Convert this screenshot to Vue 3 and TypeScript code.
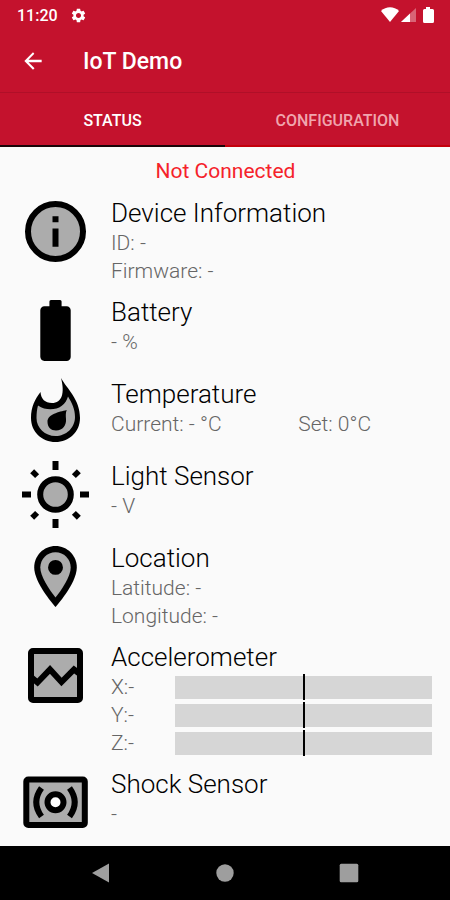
<script setup lang="ts">
import { ref } from 'vue'

type Icon = 'info' | 'battery' | 'flame' | 'sun' | 'pin' | 'chart' | 'shock'

interface Sensor {
  icon: Icon
  title: string
  lines?: string[][]
  axes?: string[]
}

const sensors: Sensor[] = [
  { icon: 'info', title: 'Device Information', lines: [['ID: -'], ['Firmware: -']] },
  { icon: 'battery', title: 'Battery', lines: [['- %']] },
  { icon: 'flame', title: 'Temperature', lines: [['Current: - °C', 'Set: 0°C']] },
  { icon: 'sun', title: 'Light Sensor', lines: [['- V']] },
  { icon: 'pin', title: 'Location', lines: [['Latitude: -'], ['Longitude: -']] },
  { icon: 'chart', title: 'Accelerometer', axes: ['X', 'Y', 'Z'] },
  { icon: 'shock', title: 'Shock Sensor', lines: [['-']] },
]

const tabs = ['Status', 'Configuration']
const active = ref('Status')
const straightRays = [0, 90, 180, 270]
const diagonalRays = [45, 135, 225, 315]
</script>

<template>
  <div class="screen">
    <header class="top">
      <div class="statusbar">
        <span class="clock">11:20</span>
        <svg class="gear" viewBox="0 0 24 24" aria-hidden="true">
          <path d="M19.14 12.94c.04-.3.06-.61.06-.94 0-.32-.02-.64-.07-.94l2.03-1.58c.18-.14.23-.41.12-.61l-1.92-3.32c-.12-.22-.37-.29-.59-.22l-2.39.96c-.5-.38-1.03-.7-1.62-.94L14.4 2.81c-.04-.24-.24-.41-.48-.41h-3.84c-.24 0-.43.17-.47.41L9.25 5.35c-.59.24-1.13.57-1.62.94l-2.39-.96c-.22-.08-.47 0-.59.22L2.74 8.87c-.12.21-.08.47.12.61l2.03 1.58c-.05.3-.09.63-.09.94s.02.64.07.94l-2.03 1.58c-.18.14-.23.41-.12.61l1.92 3.32c.12.22.37.29.59.22l2.39-.96c.5.38 1.03.7 1.62.94l.36 2.54c.05.24.24.41.48.41h3.84c.24 0 .44-.17.47-.41l.36-2.54c.59-.24 1.13-.56 1.62-.94l2.39.96c.22.08.47 0 .59-.22l1.92-3.32c.12-.22.07-.47-.12-.61l-2.01-1.58zM12 15.6c-1.98 0-3.6-1.62-3.6-3.6s1.62-3.6 3.6-3.6 3.6 1.62 3.6 3.6-1.62 3.6-3.6 3.6z" />
        </svg>
        <svg class="signals" viewBox="0 0 54 16" aria-hidden="true">
          <path d="M0 4C5 -1 13 -1 18 4L9 15z" />
          <path d="M20 15L35 1V15z" opacity=".35" />
          <path d="M20 15L29 6.500V15z" />
          <path d="M45 0h4v2h2.500q1.500 0 1.500 1.500v11q0 1.500-1.500 1.500h-8q-1.500 0-1.500-1.500v-11q0-1.500 1.500-1.500h1.500z" />
        </svg>
      </div>
      <div class="toolbar">
        <button class="back" type="button" aria-label="Back">
          <svg viewBox="0 0 24 24"><path d="M20 10.800H7.830l5.390-5.390L12 4l-8 8 8 8 1.410-1.410L7.830 13.200H20z" /></svg>
        </button>
        <h1>IoT Demo</h1>
      </div>
      <div class="tabs" role="tablist">
        <button
          v-for="tab in tabs"
          :key="tab"
          type="button"
          role="tab"
          class="tab"
          :class="{ active: tab === active }"
          :aria-selected="tab === active"
          @click="active = tab"
        >{{ tab }}</button>
      </div>
    </header>

    <main>
      <p class="connection">Not Connected</p>
      <section v-for="s in sensors" :key="s.title" class="sensor">
        <svg class="icon" viewBox="0 0 73 73" aria-hidden="true">
          <g v-if="s.icon === 'info'">
            <circle cx="36.500" cy="36.500" r="27.500" class="outlined" />
            <path d="M33.500 21.300h6v6h-6zM33.500 33.500h6v18.200h-6z" />
          </g>
          <path
            v-else-if="s.icon === 'battery'"
            transform="scale(3.042)"
            d="M15.670 4H14V2.500Q14 2 13.500 2h-3Q10 2 10 2.500V4H8.330C7.600 4 7 4.600 7 5.330v15.330C7 21.400 7.600 22 8.330 22h7.330c.74 0 1.340-.6 1.340-1.330V5.330C17 4.600 16.400 4 15.670 4z"
          />
          <g v-else-if="s.icon === 'flame'">
            <path d="M42 2C48 13 61 23 61 42C61 56 50 66 36.500 66C23 66 12 56 12 42C12 31 16 23 21.500 16C22 23 26 27 33 27C43 27 46 17 42 2z" />
            <path class="tone" d="M19 29.500C27 35 37 34 42.500 30C46 27.500 48 24 49 20.500C53 27 56 33 56 41C56 52 47 60 36.500 60C26 60 17.500 52 17.500 42C17.500 37 18 33 19 29.500z" />
            <path d="M47.700 34C40 36 28.500 38 28.500 46C28.500 51 32 54.500 37 54.500C44 54.500 47.500 49 47 43C46.800 40 46.500 37 47.700 34z" />
          </g>
          <g v-else-if="s.icon === 'sun'">
            <circle cx="36.500" cy="36.500" r="15.300" class="outlined" />
            <path v-for="a in straightRays" :key="a" :transform="`rotate(${a} 36.5 36.5)`" d="M33.500 3h6v9h-6z" />
            <path v-for="a in diagonalRays" :key="a" :transform="`rotate(${a} 36.5 36.5)`" d="M33.700 3.500h5.600v7h-5.600z" />
          </g>
          <g v-else-if="s.icon === 'pin'" transform="scale(3.042)">
            <path d="M12 2C8.130 2 5 5.130 5 9c0 5.250 7 13 7 13s7-7.750 7-13c0-3.870-3.130-7-7-7z" />
            <path class="tone" d="M7 9c0-2.760 2.240-5 5-5s5 2.240 5 5c0 2.880-2.880 7.190-5 9.880C9.920 16.210 7 11.850 7 9z" />
            <circle cx="12" cy="9" r="2.450" />
          </g>
          <g v-else-if="s.icon === 'chart'">
            <rect x="12" y="12" width="49" height="49" rx="2" class="outlined" />
            <path class="line" d="M12 38L18.500 43.500L31 30.500L42.500 43L55 30.500L61 35" />
          </g>
          <g v-else>
            <rect x="7.300" y="13.500" width="58.500" height="45.500" rx="2" class="outlined" />
            <circle cx="36.500" cy="36.300" r="8" class="outlined hollow" />
            <path class="line" d="M22.500 22Q12 36.300 22.500 50.500M50.500 22Q61 36.300 50.500 50.500" />
          </g>
        </svg>
        <div class="text">
          <h2>{{ s.title }}</h2>
          <p v-for="(line, i) in s.lines" :key="i" class="line-row">
            <span v-for="part in line" :key="part">{{ part }}</span>
          </p>
          <div v-for="axis in s.axes" :key="axis" class="axis">
            <span>{{ axis }}:-</span>
            <div class="bar"><i class="marker"></i></div>
          </div>
        </div>
      </section>
    </main>

    <nav class="navbar">
      <button type="button" aria-label="Back"><svg viewBox="0 0 20 20"><path d="M1 10L18 .500V19.500z" /></svg></button>
      <button type="button" aria-label="Home"><svg viewBox="0 0 20 20"><circle cx="10" cy="10" r="8.700" /></svg></button>
      <button type="button" aria-label="Recent apps"><svg viewBox="0 0 20 20"><rect x=".7" y=".7" width="18.600" height="18.600" rx="1.500" /></svg></button>
    </nav>
  </div>
</template>

<style>
body {
  margin: 0;
  background: #fafafa;
}
</style>

<style scoped>
.screen {
  display: flex;
  flex-direction: column;
  min-height: 100vh;
  font-family: Roboto, sans-serif;
  background: #fafafa;
  color: #000;
}
button {
  margin: 0;
  padding: 0;
  border: 0;
  background: none;
  font-family: inherit;
  cursor: pointer;
}
h1, h2, p {
  margin: 0;
}
.top {
  background: #c4122d;
  color: #fff;
  fill: #fff;
}
.statusbar {
  display: flex;
  align-items: center;
  height: 30px;
  padding: 0 15px 0 17px;
}
.clock {
  font-size: 16px;
  font-weight: 500;
}
.gear {
  width: 17px;
  height: 17px;
  margin-left: 12px;
}
.signals {
  width: 54px;
  height: 16px;
  margin-left: auto;
}
.toolbar {
  display: flex;
  align-items: center;
  height: 62px;
  padding-left: 20px;
  border-bottom: 1px solid #b00f28;
}
.back {
  display: flex;
}
.back svg {
  width: 26px;
  height: 26px;
  fill: #fff;
}
h1 {
  margin-left: 37px;
  font-size: 23px;
  font-weight: 500;
}
.tabs {
  display: grid;
  grid-template-columns: 1fr 1fr;
}
.tab {
  height: 54px;
  padding-top: 2px;
  border-bottom: 2px solid #c4000c;
  color: #f0a5ae;
  font-size: 16px;
  font-weight: 500;
  text-transform: uppercase;
}
.tab.active {
  border-color: #1a0508;
  color: #fff;
}
main {
  flex: 1;
  padding: 10px 18px 0 19px;
}
.connection {
  padding-bottom: 10px;
  color: #f5222a;
  font-size: 21px;
  font-weight: 400;
  line-height: 28px;
  text-align: center;
}
.sensor {
  display: flex;
  gap: 19px;
  margin-bottom: 9px;
}
.sensor:last-child {
  margin-bottom: 0;
}
.icon {
  flex: none;
  width: 73px;
  height: 73px;
}
.tone {
  fill: #acacac;
}
.outlined {
  fill: #acacac;
  stroke: #000;
  stroke-width: 6px;
}
.hollow {
  fill: #fff;
}
.line {
  fill: none;
  stroke: #000;
  stroke-width: 6px;
}
.text {
  flex: 1;
  padding-top: 2px;
}
h2 {
  font-size: 26px;
  font-weight: 300;
  line-height: 32px;
}
.line-row {
  display: grid;
  grid-template-columns: 7fr 5fr;
}
.line-row,
.axis {
  color: #666;
  font-size: 21px;
  font-weight: 300;
  line-height: 28px;
}
.axis {
  display: grid;
  grid-template-columns: 1fr 4fr;
  align-items: center;
}
.bar {
  display: flex;
  align-items: center;
  justify-content: center;
  height: 23px;
  background: #d6d6d6;
}
.marker {
  flex: none;
  width: 2px;
  height: 26px;
  background: #000;
}
.navbar {
  display: flex;
  justify-content: center;
  gap: 104px;
  height: 54px;
  background: #000;
}
.navbar button {
  display: flex;
  align-items: center;
}
.navbar svg {
  width: 20px;
  height: 20px;
  fill: #9e9e9e;
}
</style>
